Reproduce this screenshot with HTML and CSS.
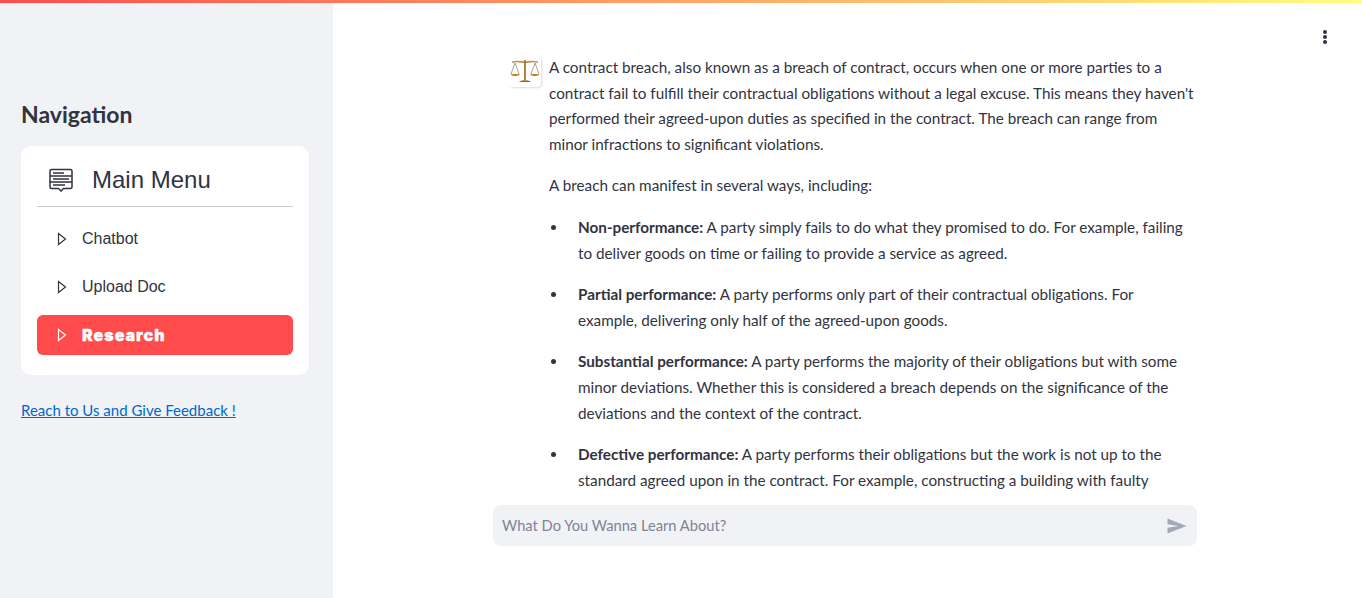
FILE: index.html
```html
<!DOCTYPE html>
<html lang="en">
<head>
    <meta charset="UTF-8">
    <title>Research</title>
    <link rel="stylesheet" href="styles.css">
</head>
<body>
    <div class="top-bar"></div>
    <div class="app">
        <aside class="sidebar">
            <h2 class="nav-title">Navigation</h2>
            <div class="menu-card">
                <div class="menu-head">
                    <svg class="menu-icon" width="26" height="24" viewBox="0 0 26 24" fill="none" stroke="#31333f" stroke-width="1.5">
                        <path d="M3.5 1.5h19a1.5 1.5 0 0 1 1.5 1.5v16a1.5 1.5 0 0 1-1.5 1.5h-7l-2.500 2.500-2.500-2.500h-7a1.500 1.500 0 0 1-1.500-1.500v-16a1.500 1.500 0 0 1 1.500-1.500z"/>
                        <path d="M2 8h22M2 14h22"/>
                        <path d="M5 5h11M5 11h16M5 17h12" stroke-width="1.300"/>
                    </svg>
                    <span class="menu-title">Main Menu</span>
                </div>
                <hr class="menu-line">
                <a class="menu-item">
                    <svg class="play" width="10" height="14" viewBox="0 0 10 14" fill="none" stroke="currentColor" stroke-width="1.200"><path d="M1.500 1.500v11l7-5.500z"/></svg>
                    <span>Chatbot</span>
                </a>
                <a class="menu-item">
                    <svg class="play" width="10" height="14" viewBox="0 0 10 14" fill="none" stroke="currentColor" stroke-width="1.200"><path d="M1.500 1.500v11l7-5.500z"/></svg>
                    <span>Upload Doc</span>
                </a>
                <a class="menu-item active">
                    <svg class="play" width="10" height="14" viewBox="0 0 10 14" fill="none" stroke="currentColor" stroke-width="1.200"><path d="M1.500 1.500v11l7-5.500z"/></svg>
                    <span>Research</span>
                </a>
            </div>
            <a class="feedback" href="#">Reach to Us and Give Feedback !</a>
        </aside>

        <main class="main">
            <div class="kebab"><i></i><i></i><i></i></div>
            <div class="chat">
                <div class="messages">
                    <div class="message">
                        <div class="avatar">
                            <svg width="30" height="30" viewBox="0 0 30 30" fill="none">
                                <defs>
                                    <linearGradient id="gold" x1="0" y1="0" x2="0" y2="1">
                                        <stop offset="0" stop-color="#d9a441"/>
                                        <stop offset="1" stop-color="#8a5a14"/>
                                    </linearGradient>
                                </defs>
                                <path d="M14.200 4h1.600v20h-1.600z" fill="#9a6a1c"/>
                                <path d="M2 5.500c4-1 8-.8 13 0 5-.8 9-1 13 0v1.200c-4-.8-8-.6-13 .3-5-.9-9-1.100-13-.3z" fill="url(#gold)"/>
                                <path d="M5 7l-4 11M5 7l4 11M25 7l-4 11M25 7l4 11" stroke="#8d7a5a" stroke-width=".7"/>
                                <path d="M.5 18h9.500c-.8 2.600-8.700 2.600-9.500 0zM20 18h9.500c-.8 2.600-8.700 2.600-9.500 0z" fill="url(#gold)"/>
                                <path d="M9 26c1.500-2.200 10.500-2.200 12 0z" fill="#a06a12"/>
                            </svg>
                        </div>
                        <div class="message-body">
                            <p>A contract breach, also known as a breach of contract, occurs when one or more parties to a<br>contract fail to fulfill their contractual obligations without a legal excuse. This means they haven't<br>performed their agreed-upon duties as specified in the contract. The breach can range from<br>minor infractions to significant violations.</p>
                            <p>A breach can manifest in several ways, including:</p>
                            <ul>
                                <li><b>Non-performance:</b> A party simply fails to do what they promised to do. For example, failing<br>to deliver goods on time or failing to provide a service as agreed.</li>
                                <li><b>Partial performance:</b> A party performs only part of their contractual obligations. For<br>example, delivering only half of the agreed-upon goods.</li>
                                <li><b>Substantial performance:</b> A party performs the majority of their obligations but with some<br>minor deviations. Whether this is considered a breach depends on the significance of the<br>deviations and the context of the contract.</li>
                                <li><b>Defective performance:</b> A party performs their obligations but the work is not up to the<br>standard agreed upon in the contract. For example, constructing a building with faulty</li>
                            </ul>
                        </div>
                    </div>
                </div>
                <div class="chat-input">
                    <span class="placeholder">What Do You Wanna Learn About?</span>
                    <svg class="send" width="20" height="16" viewBox="0 0 20 16"><path d="M0.500 0.500l19 7.500-19 7.500v-5.800l11-1.700-11-1.700z" fill="#a3a8b8"/></svg>
                </div>
            </div>
        </main>
    </div>
</body>
</html>
```

FILE: styles.css
```css
* {
    box-sizing: border-box;
}
html, body {
    height: 100%;
}
body {
    margin: 0;
    font-family: "Lato", sans-serif;
    color: #31333f;
    background-color: #fff;
    overflow: hidden;
    position: relative;
}
.top-bar {
    position: absolute;
    top: 0;
    left: 0;
    right: 0;
    height: 3px;
    background-image: linear-gradient(90deg, #ff4b4b, #fffd80);
    z-index: 5;
}
.app {
    display: flex;
    height: 598px;
}
.sidebar {
    width: 333px;
    flex: none;
    background-color: #f0f2f6;
    padding: 98px 24px 0 21px;
}
.nav-title {
    margin: 0 0 16px;
    font-size: 23px;
    line-height: 32px;
    font-weight: 700;
}
.menu-card {
    background-color: #fff;
    border-radius: 10px;
    padding: 16px;
    height: 229px;
}
.menu-head {
    display: flex;
    align-items: center;
    gap: 18px;
    height: 36px;
    padding-left: 11px;
}
.menu-title {
    font-family: "Liberation Sans", sans-serif;
    font-size: 24px;
}
.menu-line {
    margin: 8px 0 12px;
    border: none;
    border-top: 1px solid #ccc;
}
.menu-item {
    display: flex;
    align-items: center;
    gap: 15px;
    height: 40px;
    margin-bottom: 8px;
    padding-left: 20px;
    border-radius: 6px;
    font-family: "Liberation Sans", sans-serif;
    font-size: 16px;
}
.menu-item.active {
    background-color: #ff4b4b;
    color: #fff;
    font-family: "Inter", sans-serif;
    font-weight: 900;
    letter-spacing: 1px;
    -webkit-text-stroke: .3px #fff;
    margin-bottom: 0;
}
.feedback {
    display: inline-block;
    margin-top: 24px;
    color: #0068c9;
    font-size: 15px;
    line-height: 22px;
}
.main {
    flex: 1;
    position: relative;
    display: flex;
    justify-content: center;
    padding-right: 5px;
}
.kebab {
    position: absolute;
    top: 30px;
    right: 35px;
    display: flex;
    flex-direction: column;
    gap: 1px;
}
.kebab i {
    width: 4px;
    height: 4px;
    border-radius: 50%;
    background-color: #31333f;
}
.chat {
    width: 704px;
    display: flex;
    flex-direction: column;
}
.messages {
    height: 492px;
    overflow: hidden;
    padding-top: 55px;
}
.message {
    display: flex;
    gap: 8px;
    padding-left: 16px;
}
.avatar {
    width: 32px;
    height: 32px;
    flex: none;
    display: flex;
    align-items: center;
    justify-content: center;
    border-radius: 4px;
    box-shadow: 1px 1px 2px #ddd;
}
.message-body {
    flex: 1;
    font-size: 15.250px;
    line-height: 25.6px;
    white-space: nowrap;
}
.message-body p {
    margin: 0 0 16px;
}
.message-body ul {
    margin: 0;
    padding-left: 29px;
    list-style: none;
}
.message-body li {
    margin-bottom: 16px;
    position: relative;
}
.message-body li::before {
    content: "";
    position: absolute;
    left: -27px;
    top: 10px;
    width: 5px;
    height: 5px;
    border-radius: 50%;
    background-color: #31333f;
}
.chat-input {
    margin-top: 13px;
    height: 41px;
    display: flex;
    align-items: center;
    justify-content: space-between;
    padding: 0 10px 0 9px;
    background-color: #f0f2f6;
    border-radius: 8px;
}
.placeholder {
    color: #808495;
    font-size: 14.700px;
    padding-bottom: 2px;
}
```
